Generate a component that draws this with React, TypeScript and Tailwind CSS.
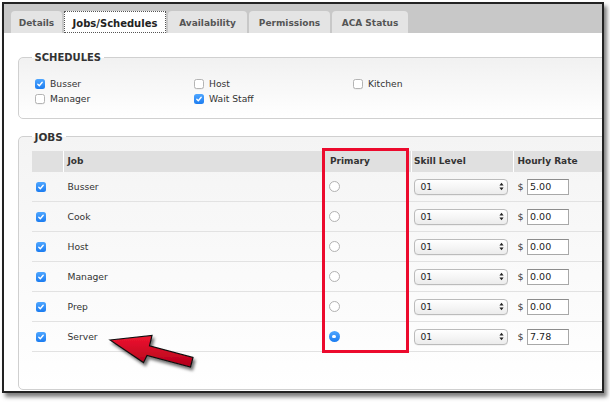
import React from "react";

const FONT = "font-['DejaVu_Sans',Verdana,sans-serif]";

function Check({ on }: { on: boolean }) {
  if (on) {
    return (
      <span className="inline-flex w-[10px] h-[10px] shrink-0 items-center justify-center rounded-[2.5px] bg-linear-to-b from-[#4ea6ff] to-[#1a7cf0]">
        <svg width="8" height="8" viewBox="0 0 8 8">
          <path d="M1.8 4.2 L3.3 5.7 L6.2 2.3" fill="none" stroke="#fff" strokeWidth="1.4" strokeLinecap="round" strokeLinejoin="round" />
        </svg>
      </span>
    );
  }
  return <span className="inline-block w-[10px] h-[10px] shrink-0 rounded-[2.5px] border border-[#b4b4b4] bg-white shadow-[0_0.5px_0.5px_rgba(0,0,0,0.08)]" />;
}

function Radio({ on }: { on: boolean }) {
  if (on) {
    return (
      <span className="inline-flex w-[11px] h-[11px] shrink-0 items-center justify-center rounded-full bg-linear-to-b from-[#4ea6ff] to-[#1a7cf0]">
        <span className="w-[3.5px] h-[3.5px] rounded-full bg-white" />
      </span>
    );
  }
  return <span className="inline-block w-[11px] h-[11px] shrink-0 rounded-full border border-[#b2b2b2] bg-white" />;
}

function Select() {
  return (
    <div className="w-[94px] h-[16px] flex items-center justify-between pl-[5.5px] pr-[3.5px] rounded-[4px] border border-[#bbbbbb] bg-linear-to-b from-white to-[#ececec] shadow-[0_0.5px_0.5px_rgba(0,0,0,0.08)] text-[9.2px] text-[#222]">
      <span>01</span>
      <svg width="5" height="9" viewBox="0 0 5 9">
        <path d="M0.4 3.6 L2.5 0.7 L4.6 3.6 Z M0.4 5.4 L2.5 8.3 L4.6 5.4 Z" fill="#222" />
      </svg>
    </div>
  );
}

const tabs = [
  { label: "Details", w: "w-[51px]", active: false },
  { label: "Jobs/Schedules", w: "w-[102px]", active: true },
  { label: "Availability", w: "w-[79px]", active: false },
  { label: "Permissions", w: "w-[81px]", active: false },
  { label: "ACA Status", w: "w-[76px]", active: false },
];

const schedules: { label: string; on: boolean }[] = [
  { label: "Busser", on: true },
  { label: "Host", on: false },
  { label: "Kitchen", on: false },
  { label: "Manager", on: false },
  { label: "Wait Staff", on: true },
];

const jobs = [
  { name: "Busser", primary: false, rate: "5.00" },
  { name: "Cook", primary: false, rate: "0.00" },
  { name: "Host", primary: false, rate: "0.00" },
  { name: "Manager", primary: false, rate: "0.00" },
  { name: "Prep", primary: false, rate: "0.00" },
  { name: "Server", primary: true, rate: "7.78" },
];

export default function App() {
  return (
    <div className={`relative w-[610px] h-[402px] overflow-hidden bg-white pt-[2px] pl-[2px] text-[#333] ${FONT}`}>
      <div className="w-[602px] h-[391px] flex flex-col overflow-hidden border-2 border-[#222] bg-white shadow-[3px_4px_4px_rgba(0,0,0,0.5)]">
        {/* tab strip */}
        <div className="h-[29px] shrink-0 flex items-end gap-[2px] pl-[7px] bg-[#c8c8c8]">
          {tabs.map((t) =>
            t.active ? (
              <div key={t.label} className={`${t.w} h-[22px] flex items-center justify-center pt-[3px] bg-white border border-dotted border-[#555] text-[10px] font-bold text-[#222]`}>
                {t.label}
              </div>
            ) : (
              <div key={t.label} className={`${t.w} h-[22px] flex items-center justify-center pt-[3px] rounded-t-[4px] bg-[#e4e4e4] text-[9px] font-bold text-[#555]`}>
                {t.label}
              </div>
            )
          )}
        </div>

        {/* tab body */}
        <div className="flex-1 pl-[13.5px] pt-[18.5px] bg-white">
          <fieldset className="w-[620px] rounded-[5px] border border-[#d0d0d0] pl-[13px] pt-[12.5px] pb-[11px] bg-linear-to-b from-[#f1f1f1] to-white">
            <legend className="px-[3px] text-[10px] leading-[12px] font-bold text-[#333]">SCHEDULES</legend>
            <div className="grid grid-cols-[159px_159px_159px] pl-[3.5px]">
              {schedules.map((s) => (
                <div key={s.label} className="h-[15.6px] flex items-center gap-[5px] text-[9.2px]">
                  <Check on={s.on} />
                  <span>{s.label}</span>
                </div>
              ))}
            </div>
          </fieldset>

          <fieldset className="mt-[11.5px] w-[620px] rounded-[5px] border border-[#d0d0d0] pl-[13px] pt-[8.5px] pb-[36.5px] bg-linear-to-b from-[#f4f4f4] to-white">
            <legend className="px-[3px] text-[10.5px] leading-[12px] font-bold text-[#333]">JOBS</legend>
            <div className="flex flex-col">
              {/* header */}
              <div className="h-[21px] flex bg-[#e0e0e0] text-[9px] font-bold text-[#333]">
                <div className="w-[31px] shrink-0" />
                <div className="w-[261px] shrink-0 flex items-center pl-[4px] border-l border-white">Job</div>
                <div className="w-[87px] shrink-0 flex items-center pl-[5.5px] border-l border-white">Primary</div>
                <div className="w-[102px] shrink-0 flex items-center pl-[2.5px] border-l border-white">Skill Level</div>
                <div className="flex-1 flex items-center pl-[4px] border-l border-white">Hourly Rate</div>
              </div>
              {jobs.map((j) => (
                <div key={j.name} className="h-[30px] flex border-b border-[#e2e2e2] text-[9.2px]">
                  <div className="w-[31px] shrink-0 flex items-center pl-[4.3px]">
                    <Check on={true} />
                  </div>
                  <div className="w-[261px] shrink-0 flex items-center pl-[5px]">{j.name}</div>
                  <div className="w-[87px] shrink-0 flex items-center pl-[5px]">
                    <Radio on={j.primary} />
                  </div>
                  <div className="w-[102px] shrink-0 flex items-center pl-[3.5px]">
                    <Select />
                  </div>
                  <div className="flex-1 flex items-center pl-[5px] gap-[3.5px]">
                    <span className="text-[9.5px]">$</span>
                    <div className="w-[42px] h-[16px] flex items-center pl-[2px] border border-[#a8a8a8] border-t-[#8c8c8c] bg-white text-[9.5px] text-[#222]">
                      {j.rate}
                    </div>
                  </div>
                </div>
              ))}
            </div>
          </fieldset>
        </div>
      </div>

      {/* highlight box around the Primary column */}
      <div className="absolute left-[322px] top-[148px] w-[87px] h-[205px] border-[3px] border-[#ec0a2d]" />

      {/* pointer arrow */}
      <svg className="absolute left-0 top-0 pointer-events-none" width="610" height="402" viewBox="0 0 610 402">
        <defs>
          <linearGradient id="arrowFill" x1="0" y1="0" x2="0" y2="1">
            <stop offset="0" stopColor="#f01530" />
            <stop offset="1" stopColor="#b0001a" />
          </linearGradient>
          <filter id="arrowShadow" x="-20%" y="-20%" width="150%" height="160%">
            <feDropShadow dx="2" dy="3" stdDeviation="1.6" floodColor="#000" floodOpacity="0.55" />
          </filter>
        </defs>
        <polygon
          points="110,340 152,335.5 149.5,345.8 193,357.5 190.5,367 147,355.4 143.5,362.5"
          fill="url(#arrowFill)"
          stroke="#111"
          strokeWidth="1.2"
          strokeLinejoin="miter"
          filter="url(#arrowShadow)"
        />
      </svg>
    </div>
  );
}
